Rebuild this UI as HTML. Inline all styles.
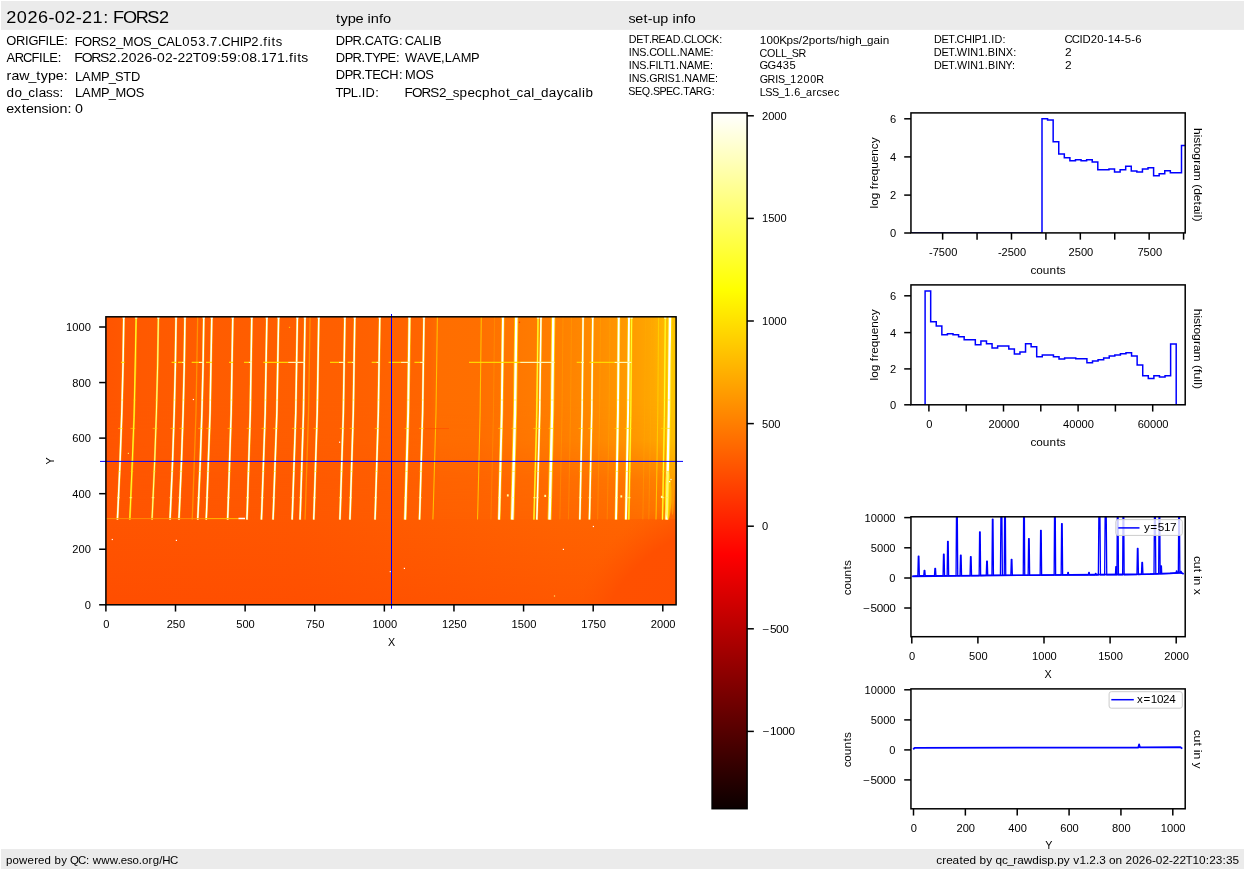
<!DOCTYPE html>
<html><head><meta charset="utf-8"><title>FORS2 raw display</title>
<style>html,body{margin:0;padding:0;background:#fff;}body{width:1245px;height:870px;overflow:hidden;font-family:"Liberation Sans", sans-serif;}svg{will-change:transform;}svg text{font-family:"Liberation Sans", sans-serif;}</style>
</head><body>
<svg width="1245" height="870" viewBox="0 0 1245 870" font-family='"Liberation Sans", sans-serif' style="display:block">
<defs>
<linearGradient id="hot" x1="0" y1="0" x2="0" y2="1"><stop offset="0" stop-color="#ffffff"/><stop offset="0.254" stop-color="#ffff00"/><stop offset="0.635" stop-color="#ff0000"/><stop offset="1" stop-color="#0b0000"/></linearGradient>
<linearGradient id="bgU" x1="105.9" y1="0" x2="676.1" y2="0" gradientUnits="userSpaceOnUse"><stop offset="0.0000" stop-color="rgb(255,84,0)"/><stop offset="0.0335" stop-color="rgb(255,88,0)"/><stop offset="0.1650" stop-color="rgb(255,92,0)"/><stop offset="0.3404" stop-color="rgb(255,94,0)"/><stop offset="0.4456" stop-color="rgb(255,96,0)"/><stop offset="0.5684" stop-color="rgb(255,101,0)"/><stop offset="0.5859" stop-color="rgb(255,110,0)"/><stop offset="0.6561" stop-color="rgb(255,111,0)"/><stop offset="0.6912" stop-color="rgb(255,116,0)"/><stop offset="0.7964" stop-color="rgb(255,128,0)"/><stop offset="0.8665" stop-color="rgb(255,141,0)"/><stop offset="0.9367" stop-color="rgb(255,160,0)"/><stop offset="0.9718" stop-color="rgb(255,172,0)"/><stop offset="1.0000" stop-color="rgb(255,186,0)"/></linearGradient>
<linearGradient id="fadeM" x1="0" y1="400" x2="0" y2="519" gradientUnits="userSpaceOnUse"><stop offset="0" stop-color="rgb(0,0,0)"/><stop offset="0.336" stop-color="rgb(31,31,31)"/><stop offset="0.672" stop-color="rgb(178,178,178)"/><stop offset="1" stop-color="rgb(242,242,242)"/></linearGradient>
<mask id="mFade" maskUnits="userSpaceOnUse" x="105" y="316" width="572" height="204"><rect x="105" y="400" width="572" height="119.2" fill="url(#fadeM)"/></mask>
<linearGradient id="fadeColH" x1="105.9" y1="0" x2="676.1" y2="0" gradientUnits="userSpaceOnUse"><stop offset="0.0000" stop-color="rgb(255,84,0)"/><stop offset="0.3404" stop-color="rgb(255,87,0)"/><stop offset="0.5859" stop-color="rgb(255,94,0)"/><stop offset="0.7964" stop-color="rgb(255,100,0)"/><stop offset="0.9016" stop-color="rgb(255,104,0)"/><stop offset="1.0000" stop-color="rgb(255,110,0)"/></linearGradient>
<linearGradient id="bgL" x1="105.9" y1="0" x2="676.1" y2="0" gradientUnits="userSpaceOnUse"><stop offset="0.0000" stop-color="rgb(255,85,0)"/><stop offset="0.3404" stop-color="rgb(255,87,0)"/><stop offset="0.5859" stop-color="rgb(255,93,0)"/><stop offset="0.7964" stop-color="rgb(255,99,0)"/><stop offset="0.9016" stop-color="rgb(255,100,0)"/><stop offset="1.0000" stop-color="rgb(255,98,0)"/></linearGradient>
<linearGradient id="dkL" x1="0" y1="519" x2="0" y2="604.8" gradientUnits="userSpaceOnUse"><stop offset="0" stop-color="rgb(255,60,0)" stop-opacity="0"/><stop offset="1" stop-color="rgb(255,60,0)" stop-opacity="0.3"/></linearGradient>
<radialGradient id="corner" cx="738" cy="669" r="180" gradientUnits="userSpaceOnUse"><stop offset="0" stop-color="rgb(255,78,0)" stop-opacity="1"/><stop offset="0.80" stop-color="rgb(255,80,0)" stop-opacity="1"/><stop offset="0.90" stop-color="rgb(255,84,0)" stop-opacity="0.5"/><stop offset="1" stop-color="rgb(255,90,0)" stop-opacity="0"/></radialGradient>
<radialGradient id="glowTR" cx="676" cy="330" r="150" gradientUnits="userSpaceOnUse" gradientTransform="translate(676 330) scale(0.16 1) translate(-676 -330)"><stop offset="0" stop-color="#ffd000" stop-opacity="0.45"/><stop offset="1" stop-color="#ffd000" stop-opacity="0"/></radialGradient>
<clipPath id="cImg"><rect x="105.9" y="316.8" width="570.2" height="288"/></clipPath>
<clipPath id="cP1"><rect x="910.95" y="112.9" width="274.25" height="120"/></clipPath>
<clipPath id="cP2"><rect x="910.95" y="284.9" width="274.25" height="119.9"/></clipPath>
<clipPath id="cP3"><rect x="910.95" y="516.8" width="274.25" height="119.9"/></clipPath>
<clipPath id="cP4"><rect x="910.95" y="688.9" width="274.25" height="119.9"/></clipPath>
</defs>
<rect x="0" y="0" width="1245" height="870" fill="#fff"/>
<rect x="1" y="1" width="1243" height="28.9" fill="#ebebeb"/>
<rect x="1" y="849" width="1243" height="20" fill="#ebebeb"/>
<text transform="translate(6.00 23.30) scale(1.0560 1)" x="0.25 10.29 20.33 30.38 40.16 46.12 56.16 65.95 71.90 81.94 92.02 97.18 101.37 110.69 122.87 133.84 144.82" y="0" font-size="17.17" fill="#000">2026-02-21: FORS2</text>
<text transform="translate(335.60 22.60) scale(1.1370 1)" x="0.37 4.34 10.73 17.60 24.52 28.15 31.01 38.22 41.73" y="0" font-size="12.88" fill="#000">type info</text>
<text transform="translate(628.80 22.60) scale(1.1126 1)" x="-0.29 5.73 13.18 17.05 21.20 28.33 35.47 39.18 42.15 49.48 53.10" y="0" font-size="12.88" fill="#000">set-up info</text>
<text transform="translate(6.40 44.90) scale(1.0000 1)" x="-0.09 9.53 18.58 22.05 31.56 39.14 42.68 49.39 57.95" y="0" font-size="12.88" fill="#000">ORIGFILE:</text>
<text transform="translate(75.00 45.70) scale(1.0091 1)" x="-0.37 6.99 16.53 25.12 33.71 40.74 47.40 57.98 67.50 75.24 81.59 90.51 98.91 106.30 114.18 122.07 129.77 133.89 141.59 145.02 154.00 163.35 166.40 174.79 182.49 186.64 190.90 194.69 198.92" y="0" font-size="12.88" fill="#000">FORS2_MOS_CAL053.7.CHIP2.fits</text>
<text transform="translate(6.40 61.70) scale(1.0000 1)" x="-0.02 8.24 16.64 25.00 32.59 36.12 42.84 51.40" y="0" font-size="12.88" fill="#000">ARCFILE:</text>
<text transform="translate(75.00 61.70) scale(1.0820 1)" x="-0.61 6.18 15.10 23.14 31.19 38.50 42.22 49.57 56.92 64.27 71.47 75.79 83.14 90.33 94.66 102.01 108.86 116.42 123.77 131.18 135.01 142.36 149.77 153.60 160.95 168.26 171.98 179.33 186.68 193.98 197.85 201.85 205.36 209.20" y="0" font-size="12.88" fill="#000">FORS2.2026-02-22T09:59:08.171.fits</text>
<text transform="translate(6.40 79.70) scale(1.1001 1)" x="0.19 4.57 11.63 20.19 27.05 31.21 37.81 44.92 52.12" y="0" font-size="12.88" fill="#000">raw_type:</text>
<text transform="translate(75.00 80.70) scale(1.0000 1)" x="-0.10 7.09 15.83 26.06 33.67 40.05 48.19 56.11" y="0" font-size="12.88" fill="#000">LAMP_STD</text>
<text transform="translate(6.40 97.40) scale(1.0493 1)" x="0.20 7.63 14.25 20.86 27.58 30.74 37.85 44.06 50.60" y="0" font-size="12.88" fill="#000">do_class:</text>
<text transform="translate(75.00 97.40) scale(1.0000 1)" x="-0.10 7.09 15.83 26.06 33.67 40.40 51.07 60.67" y="0" font-size="12.88" fill="#000">LAMP_MOS</text>
<text transform="translate(6.40 113.10) scale(1.1100 1)" x="-0.12 6.94 13.81 17.69 24.73 31.59 37.88 40.74 47.75 55.01" y="0" font-size="12.88" fill="#000">extension:</text>
<text transform="translate(75.00 113.10) scale(1.1107 1)" x="0.00" y="0" font-size="12.88" fill="#000">0</text>
<text transform="translate(335.60 44.50) scale(1.0000 1)" x="0.16 9.10 16.86 25.82 29.09 38.09 46.06 53.16 63.32" y="0" font-size="12.88" fill="#000">DPR.CATG:</text>
<text transform="translate(405.00 44.50) scale(1.0000 1)" x="-0.28 8.71 17.18 24.30 27.92" y="0" font-size="12.88" fill="#000">CALIB</text>
<text transform="translate(335.60 61.90) scale(1.0000 1)" x="0.16 9.10 16.86 25.82 29.26 36.54 44.12 51.84 60.40" y="0" font-size="12.88" fill="#000">DPR.TYPE:</text>
<text transform="translate(405.00 61.90) scale(1.0000 1)" x="0.10 12.00 19.81 27.63 36.07 39.75 46.94 55.68 65.91" y="0" font-size="12.88" fill="#000">WAVE,LAMP</text>
<text transform="translate(335.60 79.40) scale(1.0000 1)" x="0.16 9.10 16.86 25.82 29.26 36.67 44.63 53.69 63.35" y="0" font-size="12.88" fill="#000">DPR.TECH:</text>
<text transform="translate(405.00 79.40) scale(1.0000 1)" x="0.03 10.70 20.30" y="0" font-size="12.88" fill="#000">MOS</text>
<text transform="translate(335.60 96.70) scale(1.0000 1)" x="-0.11 7.11 15.08 22.34 26.17 29.96 39.74" y="0" font-size="12.88" fill="#000">TPL.ID:</text>
<text transform="translate(405.00 96.70) scale(1.0434 1)" x="-0.49 6.60 15.83 24.15 32.48 39.29 45.77 52.33 59.81 67.16 73.89 81.49 88.95 96.76 100.31 106.96 113.56 121.05 123.56 130.35 137.83 145.40 152.24 158.84 166.33 169.66 172.98" y="0" font-size="12.88" fill="#000">FORS2_specphot_cal_daycalib</text>
<text transform="translate(628.60 43.15) scale(1.0000 1)" x="0.14 7.74 14.51 20.52 22.79 30.00 36.86 44.14 52.19 55.10 62.53 68.16 76.01 83.36 90.62" y="0" font-size="10.73" fill="#000">DET.READ.CLOCK:</text>
<text transform="translate(759.80 43.85) scale(1.0917 1)" x="0.05 6.12 12.20 17.77 24.52 30.34 35.63 38.78 44.84 50.79 56.87 61.00 64.17 69.45 72.59 78.74 81.30 87.35 92.77 98.18 104.14 110.18 112.74" y="0" font-size="10.73" fill="#000">100Kps/2ports/high_gain</text>
<text transform="translate(628.60 56.10) scale(1.0000 1)" x="0.05 3.10 10.60 17.65 20.56 28.00 36.19 42.00 48.05 51.22 58.97 66.14 74.82 81.96" y="0" font-size="10.73" fill="#000">INS.COLL.NAME:</text>
<text transform="translate(759.80 56.60) scale(1.0000 1)" x="-0.24 7.20 15.40 21.20 26.71 32.03 38.66" y="0" font-size="10.73" fill="#000">COLL_SR</text>
<text transform="translate(628.60 69.00) scale(1.0000 1)" x="0.05 3.10 10.60 17.65 20.51 26.83 29.78 34.85 40.93 47.39 50.56 58.32 65.49 74.16 81.30" y="0" font-size="10.73" fill="#000">INS.FILT1.NAME:</text>
<text transform="translate(759.80 68.70) scale(1.0415 1)" x="-0.30 7.46 15.70 22.07 28.44" y="0" font-size="10.73" fill="#000">GG435</text>
<text transform="translate(628.60 82.00) scale(1.0000 1)" x="0.05 3.10 10.60 17.65 20.66 28.61 36.15 38.91 46.13 52.59 55.76 63.52 70.69 79.36 86.50" y="0" font-size="10.73" fill="#000">INS.GRIS1.NAME:</text>
<text transform="translate(759.80 82.60) scale(1.0021 1)" x="-0.15 7.79 15.32 18.07 24.56 30.47 37.09 43.70 50.32 56.35" y="0" font-size="10.73" fill="#000">GRIS_1200R</text>
<text transform="translate(628.60 94.90) scale(1.0000 1)" x="-0.27 6.33 13.12 21.56 24.44 30.89 37.32 43.96 51.63 54.69 60.73 67.21 74.57 83.04" y="0" font-size="10.73" fill="#000">SEQ.SPEC.TARG:</text>
<text transform="translate(759.80 95.50) scale(1.0128 1)" x="-0.12 5.42 11.95 18.38 24.23 30.63 34.04 39.89 45.61 52.08 56.01 61.41 66.95 73.24" y="0" font-size="10.73" fill="#000">LSS_1.6_arcsec</text>
<text transform="translate(933.80 43.15) scale(1.0070 1)" x="0.11 7.66 14.39 20.37 22.63 30.13 37.93 40.49 47.49 53.92 57.09 60.22 68.33" y="0" font-size="10.73" fill="#000">DET.CHIP1.ID:</text>
<text transform="translate(1064.90 43.15) scale(1.0541 1)" x="-0.42 6.48 13.77 16.65 24.49 30.78 36.91 40.64 46.93 53.05 56.78 62.91 66.64" y="0" font-size="10.73" fill="#000">CCID20-14-5-6</text>
<text transform="translate(933.80 56.10) scale(1.0212 1)" x="0.05 7.50 14.14 20.06 22.55 32.67 35.61 43.56 49.92 52.95 60.05 62.98 70.59 77.89" y="0" font-size="10.73" fill="#000">DET.WIN1.BINX:</text>
<text transform="translate(1064.90 56.10) scale(1.1107 1)" x="0.00" y="0" font-size="10.73" fill="#000">2</text>
<text transform="translate(933.80 69.00) scale(1.0020 1)" x="0.13 7.71 14.48 20.48 23.08 33.33 36.37 44.46 50.91 54.04 61.23 64.27 71.63 77.96" y="0" font-size="10.73" fill="#000">DET.WIN1.BINY:</text>
<text transform="translate(1064.90 69.00) scale(1.1107 1)" x="0.00" y="0" font-size="10.73" fill="#000">2</text>
<text transform="translate(6.00 863.80) scale(1.0700 1)" x="0.11 6.18 12.25 20.12 26.31 30.00 35.98 42.12 45.26 51.53 57.16 59.85 67.38 74.81 78.00 81.14 89.11 97.07 104.54 107.14 112.98 118.19 124.13 127.07 133.25 137.06 143.20 146.12 153.18" y="0" font-size="10.73" fill="#000">powered by QC: www.eso.org/HC</text>
<text transform="translate(1239.20 863.80) scale(1.1009 1)" x="-275.14 -269.69 -266.14 -260.43 -254.18 -250.91 -244.99 -238.99 -235.97 -229.87 -224.37 -221.36 -215.45 -210.78 -205.27 -201.62 -195.74 -187.98 -181.87 -179.58 -174.41 -168.41 -165.39 -159.28 -153.79 -150.67 -145.16 -139.16 -136.13 -130.12 -127.10 -121.09 -118.19 -112.29 -106.29 -103.27 -97.25 -91.23 -85.21 -79.29 -75.77 -69.75 -63.83 -60.31 -54.29 -48.68 -42.48 -36.46 -30.36 -27.25 -21.23 -15.13 -12.02 -6.00" y="0" font-size="10.73" fill="#000">created by qc_rawdisp.py v1.2.3 on 2026-02-22T10:23:35</text>
<g clip-path="url(#cImg)">
<rect x="105.9" y="316.8" width="570.2" height="202.2" fill="url(#bgU)"/>
<rect x="105.9" y="316.8" width="570.2" height="202.2" fill="url(#glowTR)"/>
<rect x="105.9" y="400" width="570.2" height="119.0" fill="url(#fadeColH)" mask="url(#mFade)"/>
<rect x="105.9" y="519.0" width="570.2" height="85.79999999999995" fill="url(#bgL)"/>
<rect x="105.9" y="519.0" width="570.2" height="85.79999999999995" fill="url(#dkL)"/>
<rect x="105.9" y="459.0" width="570.2" height="145.79999999999995" fill="url(#corner)"/>
<path d="M123.80,315.8 Q122.71,417.9 117.40,519.6" fill="none" stroke="#ffe800" stroke-width="2.3" stroke-opacity="0.65"/>
<path d="M123.80,315.8 Q122.71,417.9 117.40,519.6" fill="none" stroke="#fff" stroke-width="1.5"/>
<path d="M136.20,315.8 Q135.11,417.9 129.80,519.6" fill="none" stroke="#ffd800" stroke-width="1.9" stroke-opacity="0.7"/>
<path d="M136.20,315.8 Q135.11,417.9 129.80,519.6" fill="none" stroke="#ffff30" stroke-width="1.0"/>
<path d="M158.40,315.8 Q157.31,417.9 152.00,519.6" fill="none" stroke="#ffd800" stroke-width="2.0" stroke-opacity="0.7"/>
<path d="M158.40,315.8 Q157.31,417.9 152.00,519.6" fill="none" stroke="#ffff90" stroke-width="1.1"/>
<path d="M176.10,315.8 Q175.06,417.9 170.00,519.6" fill="none" stroke="#ffe800" stroke-width="2.3" stroke-opacity="0.65"/>
<path d="M176.10,315.8 Q175.06,417.9 170.00,519.6" fill="none" stroke="#fff" stroke-width="1.5"/>
<path d="M185.00,315.8 Q183.96,417.9 178.90,519.6" fill="none" stroke="#ffe800" stroke-width="2.3" stroke-opacity="0.65"/>
<path d="M185.00,315.8 Q183.96,417.9 178.90,519.6" fill="none" stroke="#fff" stroke-width="1.5"/>
<path d="M197.70,315.8 Q196.76,417.9 192.20,519.6" fill="none" stroke="#ff9a00" stroke-width="1.3" stroke-opacity="0.85"/>
<path d="M203.80,315.8 Q202.76,417.9 197.70,519.6" fill="none" stroke="#ffe800" stroke-width="2.3" stroke-opacity="0.65"/>
<path d="M203.80,315.8 Q202.76,417.9 197.70,519.6" fill="none" stroke="#fff" stroke-width="1.5"/>
<path d="M211.80,315.8 Q210.85,417.9 206.20,519.6" fill="none" stroke="#ffe800" stroke-width="2.3" stroke-opacity="0.65"/>
<path d="M211.80,315.8 Q210.85,417.9 206.20,519.6" fill="none" stroke="#fff" stroke-width="1.5"/>
<path d="M232.80,315.8 Q231.92,417.9 227.60,519.6" fill="none" stroke="#ffe800" stroke-width="2.3" stroke-opacity="0.65"/>
<path d="M232.80,315.8 Q231.92,417.9 227.60,519.6" fill="none" stroke="#fff" stroke-width="1.5"/>
<path d="M251.80,315.8 Q250.97,417.9 246.90,519.6" fill="none" stroke="#ffe800" stroke-width="2.3" stroke-opacity="0.65"/>
<path d="M251.80,315.8 Q250.97,417.9 246.90,519.6" fill="none" stroke="#fff" stroke-width="1.5"/>
<path d="M266.90,315.8 Q265.96,417.9 261.40,519.6" fill="none" stroke="#ffe800" stroke-width="2.3" stroke-opacity="0.65"/>
<path d="M266.90,315.8 Q265.96,417.9 261.40,519.6" fill="none" stroke="#fff" stroke-width="1.5"/>
<path d="M278.60,315.8 Q277.65,417.9 273.00,519.6" fill="none" stroke="#ffe800" stroke-width="2.3" stroke-opacity="0.65"/>
<path d="M278.60,315.8 Q277.65,417.9 273.00,519.6" fill="none" stroke="#fff" stroke-width="1.5"/>
<path d="M297.40,315.8 Q296.50,417.9 292.10,519.6" fill="none" stroke="#ffe800" stroke-width="2.3" stroke-opacity="0.65"/>
<path d="M297.40,315.8 Q296.50,417.9 292.10,519.6" fill="none" stroke="#fff" stroke-width="1.5"/>
<path d="M305.00,315.8 Q304.15,417.9 300.00,519.6" fill="none" stroke="#ffe800" stroke-width="2.3" stroke-opacity="0.65"/>
<path d="M305.00,315.8 Q304.15,417.9 300.00,519.6" fill="none" stroke="#fff" stroke-width="1.5"/>
<path d="M310.10,315.8 Q309.23,417.9 305.00,519.6" fill="none" stroke="#ff9a00" stroke-width="1.3" stroke-opacity="0.85"/>
<path d="M318.80,315.8 Q317.93,417.9 313.70,519.6" fill="none" stroke="#ffe800" stroke-width="2.3" stroke-opacity="0.65"/>
<path d="M318.80,315.8 Q317.93,417.9 313.70,519.6" fill="none" stroke="#fff" stroke-width="1.5"/>
<path d="M344.90,315.8 Q344.05,417.9 339.90,519.6" fill="none" stroke="#ffe800" stroke-width="2.3" stroke-opacity="0.65"/>
<path d="M344.90,315.8 Q344.05,417.9 339.90,519.6" fill="none" stroke="#fff" stroke-width="1.5"/>
<path d="M354.80,315.8 Q353.97,417.9 349.90,519.6" fill="none" stroke="#ffe800" stroke-width="2.3" stroke-opacity="0.65"/>
<path d="M354.80,315.8 Q353.97,417.9 349.90,519.6" fill="none" stroke="#fff" stroke-width="1.5"/>
<path d="M379.80,315.8 Q378.98,417.9 375.00,519.6" fill="none" stroke="#ffe800" stroke-width="2.3" stroke-opacity="0.65"/>
<path d="M379.80,315.8 Q378.98,417.9 375.00,519.6" fill="none" stroke="#fff" stroke-width="1.5"/>
<path d="M409.50,315.8 Q408.75,417.9 405.10,519.6" fill="none" stroke="#ffe800" stroke-width="3.0" stroke-opacity="0.75"/>
<path d="M409.50,315.8 Q408.75,417.9 405.10,519.6" fill="none" stroke="#fff" stroke-width="1.9"/>
<path d="M424.00,315.8 Q423.24,417.9 419.50,519.6" fill="none" stroke="#ffe800" stroke-width="2.3" stroke-opacity="0.65"/>
<path d="M424.00,315.8 Q423.24,417.9 419.50,519.6" fill="none" stroke="#fff" stroke-width="1.5"/>
<path d="M437.40,315.8 Q436.63,417.9 432.90,519.6" fill="none" stroke="#ffd000" stroke-width="1.1" stroke-opacity="0.85"/>
<path d="M481.30,315.8 Q480.65,417.9 477.50,519.6" fill="none" stroke="#ffd000" stroke-width="1.1" stroke-opacity="0.85"/>
<path d="M494.60,315.8 Q493.97,417.9 490.90,519.6" fill="none" stroke="#ffb000" stroke-width="1.1" stroke-opacity="0.3"/>
<path d="M503.00,315.8 Q502.32,417.9 499.00,519.6" fill="none" stroke="#ffe800" stroke-width="3.0" stroke-opacity="0.75"/>
<path d="M503.00,315.8 Q502.32,417.9 499.00,519.6" fill="none" stroke="#fff" stroke-width="1.9"/>
<path d="M516.30,315.8 Q515.60,417.9 512.20,519.6" fill="none" stroke="#ffe800" stroke-width="4.0" stroke-opacity="0.8"/>
<path d="M516.30,315.8 Q515.60,417.9 512.20,519.6" fill="none" stroke="#fff" stroke-width="2.4"/>
<path d="M538.10,315.8 Q537.39,417.9 533.90,519.6" fill="none" stroke="#ffd800" stroke-width="1.9" stroke-opacity="0.7"/>
<path d="M538.10,315.8 Q537.39,417.9 533.90,519.6" fill="none" stroke="#ffff30" stroke-width="1.0"/>
<path d="M541.00,315.8 Q540.29,417.9 536.80,519.6" fill="none" stroke="#ffe800" stroke-width="2.3" stroke-opacity="0.65"/>
<path d="M541.00,315.8 Q540.29,417.9 536.80,519.6" fill="none" stroke="#fff" stroke-width="1.5"/>
<path d="M553.30,315.8 Q552.65,417.9 549.50,519.6" fill="none" stroke="#ffe800" stroke-width="4.0" stroke-opacity="0.8"/>
<path d="M553.30,315.8 Q552.65,417.9 549.50,519.6" fill="none" stroke="#fff" stroke-width="2.4"/>
<path d="M583.10,315.8 Q582.54,417.9 579.80,519.6" fill="none" stroke="#ffe800" stroke-width="2.3" stroke-opacity="0.65"/>
<path d="M583.10,315.8 Q582.54,417.9 579.80,519.6" fill="none" stroke="#fff" stroke-width="1.5"/>
<path d="M592.80,315.8 Q592.22,417.9 589.40,519.6" fill="none" stroke="#ffe800" stroke-width="2.3" stroke-opacity="0.65"/>
<path d="M592.80,315.8 Q592.22,417.9 589.40,519.6" fill="none" stroke="#fff" stroke-width="1.5"/>
<path d="M618.80,315.8 Q618.32,417.9 616.00,519.6" fill="none" stroke="#ffe800" stroke-width="3.0" stroke-opacity="0.75"/>
<path d="M618.80,315.8 Q618.32,417.9 616.00,519.6" fill="none" stroke="#fff" stroke-width="1.9"/>
<path d="M629.00,315.8 Q628.47,417.9 625.90,519.6" fill="none" stroke="#ffe800" stroke-width="3.0" stroke-opacity="0.75"/>
<path d="M629.00,315.8 Q628.47,417.9 625.90,519.6" fill="none" stroke="#fff" stroke-width="1.9"/>
<path d="M631.70,315.8 Q631.21,417.9 628.80,519.6" fill="none" stroke="#ffd800" stroke-width="1.9" stroke-opacity="0.7"/>
<path d="M631.70,315.8 Q631.21,417.9 628.80,519.6" fill="none" stroke="#ffff30" stroke-width="1.0"/>
<path d="M658.60,315.8 Q658.16,417.9 656.00,519.6" fill="none" stroke="#ffd000" stroke-width="1.1" stroke-opacity="0.85"/>
<path d="M665.30,315.8 Q664.82,417.9 662.50,519.6" fill="none" stroke="#ffd800" stroke-width="1.9" stroke-opacity="0.7"/>
<path d="M665.30,315.8 Q664.82,417.9 662.50,519.6" fill="none" stroke="#ffff30" stroke-width="1.0"/>
<path d="M670.00,315.8 Q669.42,417.9 666.60,519.6" fill="none" stroke="#ffe800" stroke-width="4.0" stroke-opacity="0.8"/>
<path d="M670.00,315.8 Q669.42,417.9 666.60,519.6" fill="none" stroke="#fff" stroke-width="2.4"/>
<path d="M563.00,315.8 Q562.46,417.9 559.80,519.6" fill="none" stroke="#ffb000" stroke-width="1.1" stroke-opacity="0.3"/>
<path d="M571.50,315.8 Q570.97,417.9 568.40,519.6" fill="none" stroke="#ffb000" stroke-width="1.1" stroke-opacity="0.3"/>
<path d="M600.50,315.8 Q600.01,417.9 597.60,519.6" fill="none" stroke="#ffb000" stroke-width="1.1" stroke-opacity="0.3"/>
<path d="M610.00,315.8 Q609.52,417.9 607.20,519.6" fill="none" stroke="#ffb000" stroke-width="1.1" stroke-opacity="0.3"/>
<path d="M645.50,315.8 Q645.04,417.9 642.80,519.6" fill="none" stroke="#ffb000" stroke-width="1.1" stroke-opacity="0.3"/>
<path d="M651.50,315.8 Q651.04,417.9 648.80,519.6" fill="none" stroke="#ffb000" stroke-width="1.1" stroke-opacity="0.3"/>
<line x1="121" y1="362.4" x2="124.5" y2="362.4" stroke="#ffe000" stroke-width="1.1" stroke-opacity="0.9"/>
<line x1="171.6" y1="362.4" x2="176.1" y2="362.4" stroke="#ffe000" stroke-width="1.1" stroke-opacity="0.9"/>
<line x1="178" y1="362.4" x2="185" y2="362.4" stroke="#ffe000" stroke-width="1.1" stroke-opacity="0.9"/>
<line x1="182.2" y1="362.4" x2="185" y2="362.4" stroke="#fff" stroke-width="0.9" stroke-opacity="0.9"/>
<line x1="191.7" y1="362.4" x2="203.8" y2="362.4" stroke="#ffe000" stroke-width="1.1" stroke-opacity="0.9"/>
<line x1="199.0" y1="362.4" x2="203.8" y2="362.4" stroke="#fff" stroke-width="0.9" stroke-opacity="0.9"/>
<line x1="206" y1="362.4" x2="212" y2="362.4" stroke="#ffe000" stroke-width="1.1" stroke-opacity="0.9"/>
<line x1="229" y1="362.4" x2="233" y2="362.4" stroke="#ffe000" stroke-width="1.1" stroke-opacity="0.9"/>
<line x1="244" y1="362.4" x2="252" y2="362.4" stroke="#ffe000" stroke-width="1.1" stroke-opacity="0.9"/>
<line x1="248.8" y1="362.4" x2="252" y2="362.4" stroke="#fff" stroke-width="0.9" stroke-opacity="0.9"/>
<line x1="263.3" y1="362.4" x2="305" y2="362.4" stroke="#ffe000" stroke-width="1.1" stroke-opacity="0.9"/>
<line x1="288.3" y1="362.4" x2="305" y2="362.4" stroke="#fff" stroke-width="0.9" stroke-opacity="0.9"/>
<line x1="330" y1="362.4" x2="345" y2="362.4" stroke="#ffe000" stroke-width="1.1" stroke-opacity="0.9"/>
<line x1="339.0" y1="362.4" x2="345" y2="362.4" stroke="#fff" stroke-width="0.9" stroke-opacity="0.9"/>
<line x1="347.6" y1="362.4" x2="354.8" y2="362.4" stroke="#ffe000" stroke-width="1.1" stroke-opacity="0.9"/>
<line x1="351.9" y1="362.4" x2="354.8" y2="362.4" stroke="#fff" stroke-width="0.9" stroke-opacity="0.9"/>
<line x1="371.7" y1="362.4" x2="379.8" y2="362.4" stroke="#ffe000" stroke-width="1.1" stroke-opacity="0.9"/>
<line x1="376.6" y1="362.4" x2="379.8" y2="362.4" stroke="#fff" stroke-width="0.9" stroke-opacity="0.9"/>
<line x1="388.6" y1="362.4" x2="409.5" y2="362.4" stroke="#ffe000" stroke-width="1.1" stroke-opacity="0.9"/>
<line x1="401.1" y1="362.4" x2="409.5" y2="362.4" stroke="#fff" stroke-width="0.9" stroke-opacity="0.9"/>
<line x1="414.4" y1="362.4" x2="424" y2="362.4" stroke="#ffe000" stroke-width="1.1" stroke-opacity="0.9"/>
<line x1="420.2" y1="362.4" x2="424" y2="362.4" stroke="#fff" stroke-width="0.9" stroke-opacity="0.9"/>
<line x1="469" y1="362.4" x2="554.5" y2="362.4" stroke="#ffe000" stroke-width="1.1" stroke-opacity="0.9"/>
<line x1="520.3" y1="362.4" x2="554.5" y2="362.4" stroke="#fff" stroke-width="0.9" stroke-opacity="0.9"/>
<line x1="576.7" y1="362.4" x2="584" y2="362.4" stroke="#ffe000" stroke-width="1.1" stroke-opacity="0.9"/>
<line x1="581.1" y1="362.4" x2="584" y2="362.4" stroke="#fff" stroke-width="0.9" stroke-opacity="0.9"/>
<line x1="589.5" y1="362.4" x2="631.4" y2="362.4" stroke="#ffe000" stroke-width="1.1" stroke-opacity="0.9"/>
<line x1="614.6" y1="362.4" x2="631.4" y2="362.4" stroke="#fff" stroke-width="0.9" stroke-opacity="0.9"/>
<line x1="118.1" y1="428.4" x2="122.8" y2="428.4" stroke="#ffe000" stroke-width="1" stroke-opacity="0.6"/>
<line x1="117.0" y1="497.6" x2="119.8" y2="497.6" stroke="#ffffa0" stroke-width="1.1" stroke-opacity="0.55"/>
<line x1="118.2" y1="471.4" x2="120.9" y2="471.4" stroke="#ffe000" stroke-width="1" stroke-opacity="0.5"/>
<line x1="120.8" y1="400" x2="123.2" y2="400" stroke="#ffe000" stroke-width="1" stroke-opacity="0.4"/>
<rect x="122.5" y="317" width="2.4" height="1.6" fill="#fff" fill-opacity="0.8"/>
<line x1="130.5" y1="428.4" x2="135.2" y2="428.4" stroke="#ffe000" stroke-width="1" stroke-opacity="0.6"/>
<line x1="129.4" y1="497.6" x2="132.2" y2="497.6" stroke="#ffffa0" stroke-width="1.1" stroke-opacity="0.55"/>
<line x1="130.6" y1="471.4" x2="133.3" y2="471.4" stroke="#ffe000" stroke-width="1" stroke-opacity="0.5"/>
<line x1="133.2" y1="400" x2="135.6" y2="400" stroke="#ffe000" stroke-width="1" stroke-opacity="0.4"/>
<rect x="134.9" y="317" width="2.4" height="1.6" fill="#fff" fill-opacity="0.8"/>
<line x1="152.7" y1="428.4" x2="157.4" y2="428.4" stroke="#ffe000" stroke-width="1" stroke-opacity="0.6"/>
<line x1="151.6" y1="497.6" x2="154.4" y2="497.6" stroke="#ffffa0" stroke-width="1.1" stroke-opacity="0.55"/>
<line x1="152.8" y1="471.4" x2="155.5" y2="471.4" stroke="#ffe000" stroke-width="1" stroke-opacity="0.5"/>
<line x1="155.4" y1="400" x2="157.8" y2="400" stroke="#ffe000" stroke-width="1" stroke-opacity="0.4"/>
<rect x="157.1" y="317" width="2.4" height="1.6" fill="#fff" fill-opacity="0.8"/>
<line x1="170.5" y1="428.4" x2="175.2" y2="428.4" stroke="#ffe000" stroke-width="1" stroke-opacity="0.6"/>
<line x1="169.5" y1="497.6" x2="172.3" y2="497.6" stroke="#ffffa0" stroke-width="1.1" stroke-opacity="0.55"/>
<line x1="170.7" y1="471.4" x2="173.4" y2="471.4" stroke="#ffe000" stroke-width="1" stroke-opacity="0.5"/>
<line x1="173.2" y1="400" x2="175.6" y2="400" stroke="#ffe000" stroke-width="1" stroke-opacity="0.4"/>
<rect x="174.8" y="317" width="2.4" height="1.6" fill="#fff" fill-opacity="0.8"/>
<line x1="179.4" y1="428.4" x2="184.1" y2="428.4" stroke="#ffe000" stroke-width="1" stroke-opacity="0.6"/>
<line x1="178.4" y1="497.6" x2="181.2" y2="497.6" stroke="#ffffa0" stroke-width="1.1" stroke-opacity="0.55"/>
<line x1="179.6" y1="471.4" x2="182.3" y2="471.4" stroke="#ffe000" stroke-width="1" stroke-opacity="0.5"/>
<line x1="182.1" y1="400" x2="184.5" y2="400" stroke="#ffe000" stroke-width="1" stroke-opacity="0.4"/>
<rect x="183.7" y="317" width="2.4" height="1.6" fill="#fff" fill-opacity="0.8"/>
<line x1="198.2" y1="428.4" x2="202.9" y2="428.4" stroke="#ffe000" stroke-width="1" stroke-opacity="0.6"/>
<line x1="197.2" y1="497.6" x2="200.0" y2="497.6" stroke="#ffffa0" stroke-width="1.1" stroke-opacity="0.55"/>
<line x1="198.4" y1="471.4" x2="201.1" y2="471.4" stroke="#ffe000" stroke-width="1" stroke-opacity="0.5"/>
<line x1="200.9" y1="400" x2="203.3" y2="400" stroke="#ffe000" stroke-width="1" stroke-opacity="0.4"/>
<rect x="202.5" y="317" width="2.4" height="1.6" fill="#fff" fill-opacity="0.8"/>
<line x1="206.4" y1="428.4" x2="211.1" y2="428.4" stroke="#ffe000" stroke-width="1" stroke-opacity="0.6"/>
<line x1="205.6" y1="497.6" x2="208.4" y2="497.6" stroke="#ffffa0" stroke-width="1.1" stroke-opacity="0.55"/>
<line x1="206.7" y1="471.4" x2="209.4" y2="471.4" stroke="#ffe000" stroke-width="1" stroke-opacity="0.5"/>
<line x1="209.0" y1="400" x2="211.4" y2="400" stroke="#ffe000" stroke-width="1" stroke-opacity="0.4"/>
<rect x="210.5" y="317" width="2.4" height="1.6" fill="#fff" fill-opacity="0.8"/>
<line x1="227.6" y1="428.4" x2="232.3" y2="428.4" stroke="#ffe000" stroke-width="1" stroke-opacity="0.6"/>
<line x1="227.0" y1="497.6" x2="229.8" y2="497.6" stroke="#ffffa0" stroke-width="1.1" stroke-opacity="0.55"/>
<line x1="227.9" y1="471.4" x2="230.6" y2="471.4" stroke="#ffe000" stroke-width="1" stroke-opacity="0.5"/>
<line x1="230.1" y1="400" x2="232.5" y2="400" stroke="#ffe000" stroke-width="1" stroke-opacity="0.4"/>
<rect x="231.5" y="317" width="2.4" height="1.6" fill="#fff" fill-opacity="0.8"/>
<line x1="246.7" y1="428.4" x2="251.4" y2="428.4" stroke="#ffe000" stroke-width="1" stroke-opacity="0.6"/>
<line x1="246.2" y1="497.6" x2="249.0" y2="497.6" stroke="#ffffa0" stroke-width="1.1" stroke-opacity="0.55"/>
<line x1="247.1" y1="471.4" x2="249.8" y2="471.4" stroke="#ffe000" stroke-width="1" stroke-opacity="0.5"/>
<line x1="249.2" y1="400" x2="251.6" y2="400" stroke="#ffe000" stroke-width="1" stroke-opacity="0.4"/>
<rect x="250.5" y="317" width="2.4" height="1.6" fill="#fff" fill-opacity="0.8"/>
<line x1="261.6" y1="428.4" x2="266.3" y2="428.4" stroke="#ffe000" stroke-width="1" stroke-opacity="0.6"/>
<line x1="260.8" y1="497.6" x2="263.6" y2="497.6" stroke="#ffffa0" stroke-width="1.1" stroke-opacity="0.55"/>
<line x1="261.8" y1="471.4" x2="264.5" y2="471.4" stroke="#ffe000" stroke-width="1" stroke-opacity="0.5"/>
<line x1="264.1" y1="400" x2="266.5" y2="400" stroke="#ffe000" stroke-width="1" stroke-opacity="0.4"/>
<rect x="265.6" y="317" width="2.4" height="1.6" fill="#fff" fill-opacity="0.8"/>
<line x1="273.2" y1="428.4" x2="277.9" y2="428.4" stroke="#ffe000" stroke-width="1" stroke-opacity="0.6"/>
<line x1="272.4" y1="497.6" x2="275.2" y2="497.6" stroke="#ffffa0" stroke-width="1.1" stroke-opacity="0.55"/>
<line x1="273.5" y1="471.4" x2="276.2" y2="471.4" stroke="#ffe000" stroke-width="1" stroke-opacity="0.5"/>
<line x1="275.8" y1="400" x2="278.2" y2="400" stroke="#ffe000" stroke-width="1" stroke-opacity="0.4"/>
<rect x="277.3" y="317" width="2.4" height="1.6" fill="#fff" fill-opacity="0.8"/>
<line x1="292.1" y1="428.4" x2="296.8" y2="428.4" stroke="#ffe000" stroke-width="1" stroke-opacity="0.6"/>
<line x1="291.5" y1="497.6" x2="294.3" y2="497.6" stroke="#ffffa0" stroke-width="1.1" stroke-opacity="0.55"/>
<line x1="292.5" y1="471.4" x2="295.2" y2="471.4" stroke="#ffe000" stroke-width="1" stroke-opacity="0.5"/>
<line x1="294.7" y1="400" x2="297.1" y2="400" stroke="#ffe000" stroke-width="1" stroke-opacity="0.4"/>
<rect x="296.1" y="317" width="2.4" height="1.6" fill="#fff" fill-opacity="0.8"/>
<line x1="299.9" y1="428.4" x2="304.6" y2="428.4" stroke="#ffe000" stroke-width="1" stroke-opacity="0.6"/>
<line x1="299.3" y1="497.6" x2="302.1" y2="497.6" stroke="#ffffa0" stroke-width="1.1" stroke-opacity="0.55"/>
<line x1="300.3" y1="471.4" x2="303.0" y2="471.4" stroke="#ffe000" stroke-width="1" stroke-opacity="0.5"/>
<line x1="302.3" y1="400" x2="304.7" y2="400" stroke="#ffe000" stroke-width="1" stroke-opacity="0.4"/>
<rect x="303.7" y="317" width="2.4" height="1.6" fill="#fff" fill-opacity="0.8"/>
<line x1="313.6" y1="428.4" x2="318.3" y2="428.4" stroke="#ffe000" stroke-width="1" stroke-opacity="0.6"/>
<line x1="313.1" y1="497.6" x2="315.9" y2="497.6" stroke="#ffffa0" stroke-width="1.1" stroke-opacity="0.55"/>
<line x1="314.0" y1="471.4" x2="316.7" y2="471.4" stroke="#ffe000" stroke-width="1" stroke-opacity="0.5"/>
<line x1="316.1" y1="400" x2="318.5" y2="400" stroke="#ffe000" stroke-width="1" stroke-opacity="0.4"/>
<rect x="317.5" y="317" width="2.4" height="1.6" fill="#fff" fill-opacity="0.8"/>
<line x1="339.8" y1="428.4" x2="344.5" y2="428.4" stroke="#ffe000" stroke-width="1" stroke-opacity="0.6"/>
<line x1="339.2" y1="497.6" x2="342.0" y2="497.6" stroke="#ffffa0" stroke-width="1.1" stroke-opacity="0.55"/>
<line x1="340.2" y1="471.4" x2="342.9" y2="471.4" stroke="#ffe000" stroke-width="1" stroke-opacity="0.5"/>
<line x1="342.2" y1="400" x2="344.6" y2="400" stroke="#ffe000" stroke-width="1" stroke-opacity="0.4"/>
<rect x="343.6" y="317" width="2.4" height="1.6" fill="#fff" fill-opacity="0.8"/>
<line x1="349.7" y1="428.4" x2="354.4" y2="428.4" stroke="#ffe000" stroke-width="1" stroke-opacity="0.6"/>
<line x1="349.2" y1="497.6" x2="352.0" y2="497.6" stroke="#ffffa0" stroke-width="1.1" stroke-opacity="0.55"/>
<line x1="350.1" y1="471.4" x2="352.8" y2="471.4" stroke="#ffe000" stroke-width="1" stroke-opacity="0.5"/>
<line x1="352.2" y1="400" x2="354.6" y2="400" stroke="#ffe000" stroke-width="1" stroke-opacity="0.4"/>
<rect x="353.5" y="317" width="2.4" height="1.6" fill="#fff" fill-opacity="0.8"/>
<line x1="374.7" y1="428.4" x2="379.4" y2="428.4" stroke="#ffe000" stroke-width="1" stroke-opacity="0.6"/>
<line x1="374.3" y1="497.6" x2="377.1" y2="497.6" stroke="#ffffa0" stroke-width="1.1" stroke-opacity="0.55"/>
<line x1="375.2" y1="471.4" x2="377.9" y2="471.4" stroke="#ffe000" stroke-width="1" stroke-opacity="0.5"/>
<line x1="377.2" y1="400" x2="379.6" y2="400" stroke="#ffe000" stroke-width="1" stroke-opacity="0.4"/>
<rect x="378.5" y="317" width="2.4" height="1.6" fill="#fff" fill-opacity="0.8"/>
<line x1="404.6" y1="428.4" x2="409.3" y2="428.4" stroke="#ffe000" stroke-width="1" stroke-opacity="0.6"/>
<line x1="404.3" y1="497.6" x2="407.1" y2="497.6" stroke="#ffffa0" stroke-width="1.1" stroke-opacity="0.55"/>
<line x1="405.2" y1="471.4" x2="407.9" y2="471.4" stroke="#ffe000" stroke-width="1" stroke-opacity="0.5"/>
<line x1="407.0" y1="400" x2="409.4" y2="400" stroke="#ffe000" stroke-width="1" stroke-opacity="0.4"/>
<rect x="408.2" y="317" width="2.4" height="1.6" fill="#fff" fill-opacity="0.8"/>
<line x1="419.1" y1="428.4" x2="423.8" y2="428.4" stroke="#ffe000" stroke-width="1" stroke-opacity="0.6"/>
<line x1="418.8" y1="497.6" x2="421.6" y2="497.6" stroke="#ffffa0" stroke-width="1.1" stroke-opacity="0.55"/>
<line x1="419.6" y1="471.4" x2="422.3" y2="471.4" stroke="#ffe000" stroke-width="1" stroke-opacity="0.5"/>
<line x1="421.5" y1="400" x2="423.9" y2="400" stroke="#ffe000" stroke-width="1" stroke-opacity="0.4"/>
<rect x="422.7" y="317" width="2.4" height="1.6" fill="#fff" fill-opacity="0.8"/>
<line x1="498.2" y1="428.4" x2="502.9" y2="428.4" stroke="#ffe000" stroke-width="1" stroke-opacity="0.6"/>
<line x1="498.2" y1="497.6" x2="501.0" y2="497.6" stroke="#ffffa0" stroke-width="1.1" stroke-opacity="0.55"/>
<line x1="498.9" y1="471.4" x2="501.6" y2="471.4" stroke="#ffe000" stroke-width="1" stroke-opacity="0.5"/>
<line x1="500.6" y1="400" x2="503.0" y2="400" stroke="#ffe000" stroke-width="1" stroke-opacity="0.4"/>
<rect x="501.7" y="317" width="2.4" height="1.6" fill="#fff" fill-opacity="0.8"/>
<line x1="511.5" y1="428.4" x2="516.2" y2="428.4" stroke="#ffe000" stroke-width="1" stroke-opacity="0.6"/>
<line x1="511.4" y1="497.6" x2="514.2" y2="497.6" stroke="#ffffa0" stroke-width="1.1" stroke-opacity="0.55"/>
<line x1="512.2" y1="471.4" x2="514.9" y2="471.4" stroke="#ffe000" stroke-width="1" stroke-opacity="0.5"/>
<line x1="513.9" y1="400" x2="516.3" y2="400" stroke="#ffe000" stroke-width="1" stroke-opacity="0.4"/>
<rect x="515.0" y="317" width="2.4" height="1.6" fill="#fff" fill-opacity="0.8"/>
<line x1="533.3" y1="428.4" x2="538.0" y2="428.4" stroke="#ffe000" stroke-width="1" stroke-opacity="0.6"/>
<line x1="533.1" y1="497.6" x2="535.9" y2="497.6" stroke="#ffffa0" stroke-width="1.1" stroke-opacity="0.55"/>
<line x1="533.9" y1="471.4" x2="536.6" y2="471.4" stroke="#ffe000" stroke-width="1" stroke-opacity="0.5"/>
<line x1="535.6" y1="400" x2="538.0" y2="400" stroke="#ffe000" stroke-width="1" stroke-opacity="0.4"/>
<rect x="536.8" y="317" width="2.4" height="1.6" fill="#fff" fill-opacity="0.8"/>
<line x1="536.2" y1="428.4" x2="540.9" y2="428.4" stroke="#ffe000" stroke-width="1" stroke-opacity="0.6"/>
<line x1="536.0" y1="497.6" x2="538.8" y2="497.6" stroke="#ffffa0" stroke-width="1.1" stroke-opacity="0.55"/>
<line x1="536.8" y1="471.4" x2="539.5" y2="471.4" stroke="#ffe000" stroke-width="1" stroke-opacity="0.5"/>
<line x1="538.5" y1="400" x2="540.9" y2="400" stroke="#ffe000" stroke-width="1" stroke-opacity="0.4"/>
<rect x="539.7" y="317" width="2.4" height="1.6" fill="#fff" fill-opacity="0.8"/>
<line x1="548.6" y1="428.4" x2="553.3" y2="428.4" stroke="#ffe000" stroke-width="1" stroke-opacity="0.6"/>
<line x1="548.6" y1="497.6" x2="551.4" y2="497.6" stroke="#ffffa0" stroke-width="1.1" stroke-opacity="0.55"/>
<line x1="549.3" y1="471.4" x2="552.0" y2="471.4" stroke="#ffe000" stroke-width="1" stroke-opacity="0.5"/>
<line x1="550.9" y1="400" x2="553.3" y2="400" stroke="#ffe000" stroke-width="1" stroke-opacity="0.4"/>
<rect x="552.0" y="317" width="2.4" height="1.6" fill="#fff" fill-opacity="0.8"/>
<line x1="578.6" y1="428.4" x2="583.3" y2="428.4" stroke="#ffe000" stroke-width="1" stroke-opacity="0.6"/>
<line x1="578.9" y1="497.6" x2="581.7" y2="497.6" stroke="#ffffa0" stroke-width="1.1" stroke-opacity="0.55"/>
<line x1="579.5" y1="471.4" x2="582.2" y2="471.4" stroke="#ffe000" stroke-width="1" stroke-opacity="0.5"/>
<line x1="580.9" y1="400" x2="583.3" y2="400" stroke="#ffe000" stroke-width="1" stroke-opacity="0.4"/>
<rect x="581.8" y="317" width="2.4" height="1.6" fill="#fff" fill-opacity="0.8"/>
<line x1="588.3" y1="428.4" x2="593.0" y2="428.4" stroke="#ffe000" stroke-width="1" stroke-opacity="0.6"/>
<line x1="588.5" y1="497.6" x2="591.3" y2="497.6" stroke="#ffffa0" stroke-width="1.1" stroke-opacity="0.55"/>
<line x1="589.1" y1="471.4" x2="591.8" y2="471.4" stroke="#ffe000" stroke-width="1" stroke-opacity="0.5"/>
<line x1="590.5" y1="400" x2="592.9" y2="400" stroke="#ffe000" stroke-width="1" stroke-opacity="0.4"/>
<rect x="591.5" y="317" width="2.4" height="1.6" fill="#fff" fill-opacity="0.8"/>
<line x1="614.5" y1="428.4" x2="619.2" y2="428.4" stroke="#ffe000" stroke-width="1" stroke-opacity="0.6"/>
<line x1="615.0" y1="497.6" x2="617.8" y2="497.6" stroke="#ffffa0" stroke-width="1.1" stroke-opacity="0.55"/>
<line x1="615.5" y1="471.4" x2="618.2" y2="471.4" stroke="#ffe000" stroke-width="1" stroke-opacity="0.5"/>
<line x1="616.7" y1="400" x2="619.1" y2="400" stroke="#ffe000" stroke-width="1" stroke-opacity="0.4"/>
<rect x="617.5" y="317" width="2.4" height="1.6" fill="#fff" fill-opacity="0.8"/>
<line x1="624.6" y1="428.4" x2="629.3" y2="428.4" stroke="#ffe000" stroke-width="1" stroke-opacity="0.6"/>
<line x1="624.9" y1="497.6" x2="627.7" y2="497.6" stroke="#ffffa0" stroke-width="1.1" stroke-opacity="0.55"/>
<line x1="625.5" y1="471.4" x2="628.2" y2="471.4" stroke="#ffe000" stroke-width="1" stroke-opacity="0.5"/>
<line x1="626.8" y1="400" x2="629.2" y2="400" stroke="#ffe000" stroke-width="1" stroke-opacity="0.4"/>
<rect x="627.7" y="317" width="2.4" height="1.6" fill="#fff" fill-opacity="0.8"/>
<line x1="627.4" y1="428.4" x2="632.1" y2="428.4" stroke="#ffe000" stroke-width="1" stroke-opacity="0.6"/>
<line x1="627.8" y1="497.6" x2="630.6" y2="497.6" stroke="#ffffa0" stroke-width="1.1" stroke-opacity="0.55"/>
<line x1="628.3" y1="471.4" x2="631.0" y2="471.4" stroke="#ffe000" stroke-width="1" stroke-opacity="0.5"/>
<line x1="629.6" y1="400" x2="632.0" y2="400" stroke="#ffe000" stroke-width="1" stroke-opacity="0.4"/>
<rect x="630.4" y="317" width="2.4" height="1.6" fill="#fff" fill-opacity="0.8"/>
<line x1="661.0" y1="428.4" x2="665.7" y2="428.4" stroke="#ffe000" stroke-width="1" stroke-opacity="0.6"/>
<line x1="661.5" y1="497.6" x2="664.3" y2="497.6" stroke="#ffffa0" stroke-width="1.1" stroke-opacity="0.55"/>
<line x1="662.0" y1="471.4" x2="664.7" y2="471.4" stroke="#ffe000" stroke-width="1" stroke-opacity="0.5"/>
<line x1="663.2" y1="400" x2="665.6" y2="400" stroke="#ffe000" stroke-width="1" stroke-opacity="0.4"/>
<rect x="664.0" y="317" width="2.4" height="1.6" fill="#fff" fill-opacity="0.8"/>
<line x1="665.5" y1="428.4" x2="670.2" y2="428.4" stroke="#ffe000" stroke-width="1" stroke-opacity="0.6"/>
<line x1="665.7" y1="497.6" x2="668.5" y2="497.6" stroke="#ffffa0" stroke-width="1.1" stroke-opacity="0.55"/>
<line x1="666.3" y1="471.4" x2="669.0" y2="471.4" stroke="#ffe000" stroke-width="1" stroke-opacity="0.5"/>
<line x1="667.7" y1="400" x2="670.1" y2="400" stroke="#ffe000" stroke-width="1" stroke-opacity="0.4"/>
<rect x="668.7" y="317" width="2.4" height="1.6" fill="#fff" fill-opacity="0.8"/>
<line x1="105.9" y1="518.6" x2="239" y2="518.6" stroke="#ff9400" stroke-width="1.0" stroke-opacity="0.9"/>
<line x1="205" y1="518.6" x2="239" y2="518.6" stroke="#ffd000" stroke-width="1.0" stroke-opacity="0.6"/>
<line x1="238.5" y1="518.5" x2="245" y2="518.5" stroke="#fff" stroke-width="1.3"/>
<line x1="425" y1="428.6" x2="449" y2="428.6" stroke="#ff4a00" stroke-width="1" stroke-opacity="0.6"/>
<ellipse cx="668" cy="495" rx="3.4" ry="24" fill="#ffee00" fill-opacity="0.55"/>
<ellipse cx="672.5" cy="420" rx="3" ry="95" fill="#ffd800" fill-opacity="0.35"/>
<rect x="111.7" y="538.9" width="1.2" height="1.2" fill="#fff"/>
<rect x="175.8" y="539.8" width="1.2" height="1.2" fill="#fff"/>
<rect x="127.8" y="452.8" width="1.2" height="1.2" fill="#ffe060"/>
<rect x="192.8" y="398.9" width="1.2" height="1.2" fill="#fff"/>
<rect x="339.0" y="441.6" width="1.2" height="1.2" fill="#fff"/>
<rect x="288.9" y="326.8" width="1.2" height="1.2" fill="#ffc000"/>
<rect x="389.7" y="571.0" width="1.2" height="1.2" fill="#fff"/>
<rect x="403.8" y="567.8" width="1.2" height="1.2" fill="#fff"/>
<rect x="592.8" y="525.9" width="1.2" height="1.2" fill="#fff"/>
<rect x="562.8" y="548.8" width="1.2" height="1.2" fill="#fff"/>
<rect x="553.9" y="595.4" width="1.2" height="1.2" fill="#ffe060"/>
<rect x="518.9" y="321.7" width="1.2" height="1.2" fill="#ff3000"/>
<rect x="670.4" y="478.9" width="1.2" height="1.2" fill="#fff"/>
<rect x="669.0" y="481.0" width="1.2" height="1.2" fill="#fff"/>
<rect x="506.9" y="494.3" width="1.8" height="2.2" fill="#ffffa0"/>
<rect x="544.3" y="494.8" width="1.8" height="2.2" fill="#ffffa0"/>
<rect x="620.4" y="495.3" width="1.8" height="2.2" fill="#ffffa0"/>
<rect x="660.9" y="495.8" width="1.8" height="2.2" fill="#ffffa0"/>
</g>
<line x1="100.00" y1="461.40" x2="683.00" y2="461.40" stroke="#0000ff" stroke-width="1.0"/>
<line x1="391.50" y1="314.00" x2="391.50" y2="608.80" stroke="#0000ff" stroke-width="1.0"/>
<rect x="105.9" y="316.8" width="570.2" height="287.99999999999994" fill="none" stroke="#000" stroke-width="1.5"/>
<line x1="105.90" y1="604.80" x2="105.90" y2="611.56" stroke="#000" stroke-width="1.5"/>
<text transform="translate(106.30 627.80) scale(1.1107 1)" x="-2.78" y="0" font-size="10.01" fill="#000">0</text>
<line x1="175.51" y1="604.80" x2="175.51" y2="611.56" stroke="#000" stroke-width="1.5"/>
<text transform="translate(175.91 627.80) scale(1.1107 1)" x="-8.35 -2.78 2.78" y="0" font-size="10.01" fill="#000">250</text>
<line x1="245.12" y1="604.80" x2="245.12" y2="611.56" stroke="#000" stroke-width="1.5"/>
<text transform="translate(245.53 627.80) scale(1.1107 1)" x="-8.35 -2.78 2.78" y="0" font-size="10.01" fill="#000">500</text>
<line x1="314.74" y1="604.80" x2="314.74" y2="611.56" stroke="#000" stroke-width="1.5"/>
<text transform="translate(315.14 627.80) scale(1.1107 1)" x="-8.35 -2.78 2.78" y="0" font-size="10.01" fill="#000">750</text>
<line x1="384.35" y1="604.80" x2="384.35" y2="611.56" stroke="#000" stroke-width="1.5"/>
<text transform="translate(384.75 627.80) scale(1.1107 1)" x="-11.14 -5.57 -0.00 5.57" y="0" font-size="10.01" fill="#000">1000</text>
<line x1="453.96" y1="604.80" x2="453.96" y2="611.56" stroke="#000" stroke-width="1.5"/>
<text transform="translate(454.36 627.80) scale(1.1107 1)" x="-11.14 -5.57 -0.00 5.57" y="0" font-size="10.01" fill="#000">1250</text>
<line x1="523.57" y1="604.80" x2="523.57" y2="611.56" stroke="#000" stroke-width="1.5"/>
<text transform="translate(523.97 627.80) scale(1.1107 1)" x="-11.14 -5.57 -0.00 5.57" y="0" font-size="10.01" fill="#000">1500</text>
<line x1="593.19" y1="604.80" x2="593.19" y2="611.56" stroke="#000" stroke-width="1.5"/>
<text transform="translate(593.59 627.80) scale(1.1107 1)" x="-11.14 -5.57 -0.00 5.57" y="0" font-size="10.01" fill="#000">1750</text>
<line x1="662.80" y1="604.80" x2="662.80" y2="611.56" stroke="#000" stroke-width="1.5"/>
<text transform="translate(663.20 627.80) scale(1.1107 1)" x="-11.14 -5.57 -0.00 5.57" y="0" font-size="10.01" fill="#000">2000</text>
<line x1="99.14" y1="604.80" x2="105.90" y2="604.80" stroke="#000" stroke-width="1.5"/>
<text transform="translate(90.80 609.00) scale(1.1107 1)" x="-5.57" y="0" font-size="10.01" fill="#000">0</text>
<line x1="99.14" y1="549.24" x2="105.90" y2="549.24" stroke="#000" stroke-width="1.5"/>
<text transform="translate(90.80 553.00) scale(1.1107 1)" x="-16.70 -11.14 -5.57" y="0" font-size="10.01" fill="#000">200</text>
<line x1="99.14" y1="493.68" x2="105.90" y2="493.68" stroke="#000" stroke-width="1.5"/>
<text transform="translate(90.80 498.00) scale(1.1107 1)" x="-16.70 -11.14 -5.57" y="0" font-size="10.01" fill="#000">400</text>
<line x1="99.14" y1="438.12" x2="105.90" y2="438.12" stroke="#000" stroke-width="1.5"/>
<text transform="translate(90.80 442.00) scale(1.1107 1)" x="-16.70 -11.14 -5.57" y="0" font-size="10.01" fill="#000">600</text>
<line x1="99.14" y1="382.56" x2="105.90" y2="382.56" stroke="#000" stroke-width="1.5"/>
<text transform="translate(90.80 387.00) scale(1.1107 1)" x="-16.70 -11.14 -5.57" y="0" font-size="10.01" fill="#000">800</text>
<line x1="99.14" y1="327.00" x2="105.90" y2="327.00" stroke="#000" stroke-width="1.5"/>
<text transform="translate(90.80 331.00) scale(1.1107 1)" x="-22.27 -16.70 -11.14 -5.57" y="0" font-size="10.01" fill="#000">1000</text>
<text transform="translate(391.60 645.80) scale(1.0000 1)" x="-3.58" y="0" font-size="10.73" fill="#000">X</text>
<text transform="translate(53.90 461.00) rotate(-90) scale(1.0000 1)" x="-3.58" y="0" font-size="10.73" fill="#000">Y</text>
<rect x="712.1" y="112.9" width="35.0" height="695.8000000000001" fill="url(#hot)" stroke="#000" stroke-width="1.5"/>
<line x1="747.10" y1="115.80" x2="753.86" y2="115.80" stroke="#000" stroke-width="1.5"/>
<text transform="translate(762.00 120.00) scale(1.1107 1)" x="0.00 5.57 11.14 16.70" y="0" font-size="10.01" fill="#000">2000</text>
<line x1="747.10" y1="218.40" x2="753.86" y2="218.40" stroke="#000" stroke-width="1.5"/>
<text transform="translate(762.00 222.00) scale(1.1107 1)" x="0.00 5.57 11.14 16.70" y="0" font-size="10.01" fill="#000">1500</text>
<line x1="747.10" y1="321.00" x2="753.86" y2="321.00" stroke="#000" stroke-width="1.5"/>
<text transform="translate(762.00 325.00) scale(1.1107 1)" x="0.00 5.57 11.14 16.70" y="0" font-size="10.01" fill="#000">1000</text>
<line x1="747.10" y1="423.60" x2="753.86" y2="423.60" stroke="#000" stroke-width="1.5"/>
<text transform="translate(762.00 428.00) scale(1.1107 1)" x="0.00 5.57 11.14" y="0" font-size="10.01" fill="#000">500</text>
<line x1="747.10" y1="526.20" x2="753.86" y2="526.20" stroke="#000" stroke-width="1.5"/>
<text transform="translate(762.00 530.00) scale(1.1107 1)" x="0.00" y="0" font-size="10.01" fill="#000">0</text>
<line x1="747.10" y1="628.80" x2="753.86" y2="628.80" stroke="#000" stroke-width="1.5"/>
<text transform="translate(762.00 633.00) scale(1.1839 1)" x="0.52 6.71 11.93 17.15" y="0" font-size="10.01" fill="#000">−500</text>
<line x1="747.10" y1="731.40" x2="753.86" y2="731.40" stroke="#000" stroke-width="1.5"/>
<text transform="translate(762.00 735.00) scale(1.1694 1)" x="0.56 6.82 12.11 17.40 22.69" y="0" font-size="10.01" fill="#000">−1000</text>
<path clip-path="url(#cP1)" d="M910.95,232.90 L1042.00,232.90 L1042.00,118.85 L1047.58,118.85 L1047.58,120.00 L1053.16,120.00 L1053.16,141.80 L1058.74,141.80 L1058.74,153.90 L1064.32,153.90 L1064.32,157.70 L1069.90,157.70 L1069.90,160.75 L1075.48,160.75 L1075.48,159.85 L1081.06,159.85 L1081.06,160.75 L1086.64,160.75 L1086.64,159.85 L1092.22,159.85 L1092.22,161.90 L1097.80,161.90 L1097.80,169.76 L1103.38,169.76 L1103.38,169.76 L1108.96,169.76 L1108.96,169.00 L1114.54,169.00 L1114.54,172.00 L1120.12,172.00 L1120.12,169.76 L1125.70,169.76 L1125.70,166.15 L1131.28,166.15 L1131.28,170.90 L1136.86,170.90 L1136.86,172.00 L1142.44,172.00 L1142.44,169.00 L1148.02,169.00 L1148.02,167.85 L1153.60,167.85 L1153.60,175.70 L1159.18,175.70 L1159.18,173.70 L1164.76,173.70 L1164.76,170.66 L1170.34,170.66 L1170.34,172.80 L1175.92,172.80 L1175.92,172.80 L1181.50,172.80 L1181.50,145.50 L1187.08,145.50 L1187.08,145.50 L1192.66,145.50" fill="none" stroke="#0000ff" stroke-width="1.5" stroke-linejoin="miter"/>
<rect x="910.95" y="112.9" width="274.25" height="120.0" fill="none" stroke="#000" stroke-width="1.5"/>
<line x1="904.19" y1="118.80" x2="910.95" y2="118.80" stroke="#000" stroke-width="1.5"/>
<text transform="translate(896.20 123.00) scale(1.1107 1)" x="-5.57" y="0" font-size="10.01" fill="#000">6</text>
<line x1="904.19" y1="156.90" x2="910.95" y2="156.90" stroke="#000" stroke-width="1.5"/>
<text transform="translate(896.20 161.00) scale(1.1107 1)" x="-5.57" y="0" font-size="10.01" fill="#000">4</text>
<line x1="904.19" y1="195.10" x2="910.95" y2="195.10" stroke="#000" stroke-width="1.5"/>
<text transform="translate(896.20 199.00) scale(1.1107 1)" x="-5.57" y="0" font-size="10.01" fill="#000">2</text>
<line x1="904.19" y1="233.00" x2="910.95" y2="233.00" stroke="#000" stroke-width="1.5"/>
<text transform="translate(896.20 237.00) scale(1.1107 1)" x="-5.57" y="0" font-size="10.01" fill="#000">0</text>
<line x1="942.64" y1="232.90" x2="942.64" y2="239.66" stroke="#000" stroke-width="1.5"/>
<text transform="translate(943.24 255.90) scale(1.1030 1)" x="-12.88 -9.60 -4.00 1.61 7.22" y="0" font-size="10.01" fill="#000">-7500</text>
<line x1="977.06" y1="232.90" x2="977.06" y2="239.66" stroke="#000" stroke-width="1.5"/>
<line x1="1011.48" y1="232.90" x2="1011.48" y2="239.66" stroke="#000" stroke-width="1.5"/>
<text transform="translate(1012.08 255.90) scale(1.1030 1)" x="-12.88 -9.60 -4.00 1.61 7.22" y="0" font-size="10.01" fill="#000">-2500</text>
<line x1="1045.90" y1="232.90" x2="1045.90" y2="239.66" stroke="#000" stroke-width="1.5"/>
<line x1="1080.32" y1="232.90" x2="1080.32" y2="239.66" stroke="#000" stroke-width="1.5"/>
<text transform="translate(1080.92 255.90) scale(1.1107 1)" x="-11.14 -5.57 -0.00 5.57" y="0" font-size="10.01" fill="#000">2500</text>
<line x1="1114.74" y1="232.90" x2="1114.74" y2="239.66" stroke="#000" stroke-width="1.5"/>
<line x1="1149.16" y1="232.90" x2="1149.16" y2="239.66" stroke="#000" stroke-width="1.5"/>
<text transform="translate(1149.76 255.90) scale(1.1107 1)" x="-11.14 -5.57 -0.00 5.57" y="0" font-size="10.01" fill="#000">7500</text>
<line x1="1183.58" y1="232.90" x2="1183.58" y2="239.66" stroke="#000" stroke-width="1.5"/>
<text transform="translate(1048.10 273.70) scale(1.1014 1)" x="-15.89 -10.70 -4.81 1.19 7.54 10.66" y="0" font-size="10.73" fill="#000">counts</text>
<text transform="translate(878.40 172.90) rotate(-90) scale(1.1090 1)" x="-32.11 -29.72 -23.86 -17.89 -14.75 -11.46 -7.93 -2.17 3.79 9.66 15.53 21.39 26.76" y="0" font-size="10.73" fill="#000">log frequency</text>
<text transform="translate(1194.00 174.80) rotate(90) scale(1.1283 1)" x="-41.51 -35.51 -33.31 -27.91 -24.76 -19.01 -12.98 -9.45 -3.61 5.34 8.31 11.84 17.62 23.76 26.91 32.81 35.38 37.87" y="0" font-size="10.73" fill="#000">histogram (detail)</text>
<path clip-path="url(#cP2)" d="M910.95,404.80 L925.10,404.80 L925.10,291.10 L930.68,291.10 L930.68,321.70 L936.26,321.70 L936.26,325.90 L941.84,325.90 L941.84,334.70 L947.42,334.70 L947.42,333.80 L953.00,333.80 L953.00,334.70 L958.58,334.70 L958.58,336.70 L964.16,336.70 L964.16,339.80 L969.74,339.80 L969.74,339.80 L975.32,339.80 L975.32,344.80 L980.90,344.80 L980.90,340.90 L986.48,340.90 L986.48,343.70 L992.06,343.70 L992.06,347.90 L997.64,347.90 L997.64,346.00 L1003.22,346.00 L1003.22,346.00 L1008.80,346.00 L1008.80,348.90 L1014.38,348.90 L1014.38,353.90 L1019.96,353.90 L1019.96,351.90 L1025.54,351.90 L1025.54,343.80 L1031.12,343.80 L1031.12,346.80 L1036.70,346.80 L1036.70,356.70 L1042.28,356.70 L1042.28,355.05 L1047.86,355.05 L1047.86,355.05 L1053.44,355.05 L1053.44,356.70 L1059.02,356.70 L1059.02,359.00 L1064.60,359.00 L1064.60,358.10 L1070.18,358.10 L1070.18,358.10 L1075.76,358.10 L1075.76,358.80 L1081.34,358.80 L1081.34,358.80 L1086.92,358.80 L1086.92,362.70 L1092.50,362.70 L1092.50,360.90 L1098.08,360.90 L1098.08,359.70 L1103.66,359.70 L1103.66,357.90 L1109.24,357.90 L1109.24,356.00 L1114.82,356.00 L1114.82,354.95 L1120.40,354.95 L1120.40,353.85 L1125.98,353.85 L1125.98,352.85 L1131.56,352.85 L1131.56,356.00 L1137.14,356.00 L1137.14,365.05 L1142.72,365.05 L1142.72,375.75 L1148.30,375.75 L1148.30,378.60 L1153.88,378.60 L1153.88,375.75 L1159.46,375.75 L1159.46,376.90 L1165.04,376.90 L1165.04,375.75 L1170.62,375.75 L1170.62,343.90 L1176.20,343.90 L1176.20,404.80 L1185.20,404.80" fill="none" stroke="#0000ff" stroke-width="1.5" stroke-linejoin="miter"/>
<rect x="910.95" y="284.9" width="274.25" height="119.90000000000003" fill="none" stroke="#000" stroke-width="1.5"/>
<line x1="904.19" y1="295.80" x2="910.95" y2="295.80" stroke="#000" stroke-width="1.5"/>
<text transform="translate(896.20 300.00) scale(1.1107 1)" x="-5.57" y="0" font-size="10.01" fill="#000">6</text>
<line x1="904.19" y1="332.60" x2="910.95" y2="332.60" stroke="#000" stroke-width="1.5"/>
<text transform="translate(896.20 337.00) scale(1.1107 1)" x="-5.57" y="0" font-size="10.01" fill="#000">4</text>
<line x1="904.19" y1="368.90" x2="910.95" y2="368.90" stroke="#000" stroke-width="1.5"/>
<text transform="translate(896.20 373.00) scale(1.1107 1)" x="-5.57" y="0" font-size="10.01" fill="#000">2</text>
<line x1="904.19" y1="404.80" x2="910.95" y2="404.80" stroke="#000" stroke-width="1.5"/>
<text transform="translate(896.20 409.00) scale(1.1107 1)" x="-5.57" y="0" font-size="10.01" fill="#000">0</text>
<line x1="928.90" y1="404.80" x2="928.90" y2="411.56" stroke="#000" stroke-width="1.5"/>
<text transform="translate(929.30 427.80) scale(1.1107 1)" x="-2.78" y="0" font-size="10.01" fill="#000">0</text>
<line x1="966.20" y1="404.80" x2="966.20" y2="411.56" stroke="#000" stroke-width="1.5"/>
<line x1="1003.50" y1="404.80" x2="1003.50" y2="411.56" stroke="#000" stroke-width="1.5"/>
<text transform="translate(1003.90 427.80) scale(1.1107 1)" x="-13.92 -8.35 -2.78 2.78 8.35" y="0" font-size="10.01" fill="#000">20000</text>
<line x1="1040.80" y1="404.80" x2="1040.80" y2="411.56" stroke="#000" stroke-width="1.5"/>
<line x1="1078.10" y1="404.80" x2="1078.10" y2="411.56" stroke="#000" stroke-width="1.5"/>
<text transform="translate(1078.50 427.80) scale(1.1107 1)" x="-13.92 -8.35 -2.78 2.78 8.35" y="0" font-size="10.01" fill="#000">40000</text>
<line x1="1115.40" y1="404.80" x2="1115.40" y2="411.56" stroke="#000" stroke-width="1.5"/>
<line x1="1152.70" y1="404.80" x2="1152.70" y2="411.56" stroke="#000" stroke-width="1.5"/>
<text transform="translate(1153.10 427.80) scale(1.1107 1)" x="-13.92 -8.35 -2.78 2.78 8.35" y="0" font-size="10.01" fill="#000">60000</text>
<text transform="translate(1048.10 445.60) scale(1.1014 1)" x="-15.89 -10.70 -4.81 1.19 7.54 10.66" y="0" font-size="10.73" fill="#000">counts</text>
<text transform="translate(878.40 344.85) rotate(-90) scale(1.1090 1)" x="-32.11 -29.72 -23.86 -17.89 -14.75 -11.46 -7.93 -2.17 3.79 9.66 15.53 21.39 26.76" y="0" font-size="10.73" fill="#000">log frequency</text>
<text transform="translate(1194.00 348.95) rotate(90) scale(1.1318 1)" x="-35.55 -29.56 -27.38 -21.98 -18.86 -13.12 -7.11 -3.59 2.23 11.16 14.12 17.83 20.88 26.87 29.42 31.90" y="0" font-size="10.73" fill="#000">histogram (full)</text>
<path clip-path="url(#cP3)" d="M912.2,576.40 L917.85,575.77 L918.30,556.20 L918.90,556.20 L919.35,575.77 L923.75,575.74 L924.20,570.30 L924.80,570.30 L925.25,575.74 L934.45,575.70 L934.90,568.30 L935.50,568.30 L935.95,575.70 L943.05,575.66 L943.50,554.20 L944.10,554.20 L944.55,575.66 L947.15,575.64 L947.60,541.30 L948.20,541.30 L948.65,575.64 L956.07,575.60 L956.57,500.00 L957.23,500.00 L957.73,575.60 L960.05,575.58 L960.50,555.10 L961.10,555.10 L961.55,575.58 L970.05,575.54 L970.50,556.70 L971.10,556.70 L971.55,575.54 L979.15,575.50 L979.60,532.00 L980.20,532.00 L980.65,575.50 L986.25,575.47 L986.70,561.10 L987.30,561.10 L987.75,575.47 L991.95,575.44 L992.40,519.10 L993.00,519.10 L993.45,575.44 L1000.42,575.40 L1001.01,500.00 L1001.79,500.00 L1002.38,575.40 L1004.25,575.39 L1004.70,500.00 L1005.30,500.00 L1005.75,575.39 L1010.85,575.36 L1011.30,559.30 L1011.90,559.30 L1012.35,575.36 L1023.25,575.30 L1023.70,500.00 L1024.30,500.00 L1024.75,575.30 L1028.15,575.28 L1028.60,538.60 L1029.20,538.60 L1029.65,575.28 L1040.15,575.23 L1040.60,530.30 L1041.20,530.30 L1041.65,575.23 L1054.15,575.17 L1054.60,500.00 L1055.20,500.00 L1055.65,575.17 L1061.15,575.14 L1061.60,523.60 L1062.20,523.60 L1062.65,575.14 L1067.50,575.11 L1067.86,572.30 L1068.34,572.30 L1068.70,575.11 L1088.40,575.02 L1088.76,572.30 L1089.24,572.30 L1089.60,575.02 L1095.17,574.99 L1095.49,573.30 L1095.91,573.30 L1096.23,574.99 L1098.35,574.97 L1098.98,500.00 L1099.82,500.00 L1100.45,574.97 L1104.65,574.94 L1105.28,500.00 L1106.12,500.00 L1106.75,574.94 L1115.47,574.90 L1115.79,566.70 L1116.21,566.70 L1116.53,574.90 L1116.95,574.89 L1117.40,500.00 L1118.00,500.00 L1118.45,574.89 L1122.65,574.87 L1123.10,500.00 L1123.70,500.00 L1124.15,574.87 L1136.95,574.52 L1137.40,548.40 L1138.00,548.40 L1138.45,574.52 L1141.45,574.35 L1141.90,562.40 L1142.50,562.40 L1142.95,574.35 L1154.00,573.88 L1154.54,500.00 L1155.26,500.00 L1155.80,573.88 L1158.65,573.71 L1159.10,500.00 L1159.70,500.00 L1160.15,573.71 L1160.67,573.64 L1160.99,565.80 L1161.41,565.80 L1161.73,573.64 L1176.07,573.06 L1176.39,571.00 L1176.81,571.00 L1177.12,573.06 L1178.35,572.97 L1178.80,500.00 L1179.40,500.00 L1179.85,572.97 L1180.47,572.90 L1180.79,571.50 L1181.21,571.50 L1181.53,572.90 L1183.6,573.80" fill="none" stroke="#0000ff" stroke-width="1.3" stroke-linejoin="round"/>
<path clip-path="url(#cP3)" d="M912.4,576.30 L1000,575.41 L1150,574.06 L1170,573.31 L1180,572.64 L1183.6,573.80" fill="none" stroke="#0000ff" stroke-width="1.7" stroke-linejoin="round"/>
<rect x="1115.8" y="519.6" width="66.5" height="15.8" rx="2.2" fill="#fff" fill-opacity="0.8" stroke="#ccc" stroke-width="1"/>
<line x1="1118.30" y1="527.90" x2="1139.50" y2="527.90" stroke="#0000ff" stroke-width="1.5"/>
<text transform="translate(1144.00 531.40) scale(1.1776 1)" x="-0.06 5.42 11.64 16.89 22.15" y="0" font-size="10.01" fill="#000">y=517</text>
<rect x="910.95" y="516.8" width="274.25" height="119.90000000000009" fill="none" stroke="#000" stroke-width="1.5"/>
<line x1="904.19" y1="517.60" x2="910.95" y2="517.60" stroke="#000" stroke-width="1.5"/>
<text transform="translate(895.50 522.00) scale(1.1107 1)" x="-27.84 -22.27 -16.70 -11.14 -5.57" y="0" font-size="10.01" fill="#000">10000</text>
<line x1="904.19" y1="547.80" x2="910.95" y2="547.80" stroke="#000" stroke-width="1.5"/>
<text transform="translate(895.50 552.00) scale(1.1107 1)" x="-22.27 -16.70 -11.14 -5.57" y="0" font-size="10.01" fill="#000">5000</text>
<line x1="904.19" y1="578.00" x2="910.95" y2="578.00" stroke="#000" stroke-width="1.5"/>
<text transform="translate(895.50 582.00) scale(1.1107 1)" x="-5.57" y="0" font-size="10.01" fill="#000">0</text>
<line x1="904.19" y1="608.00" x2="910.95" y2="608.00" stroke="#000" stroke-width="1.5"/>
<text transform="translate(895.50 612.00) scale(1.1694 1)" x="-27.56 -21.29 -16.01 -10.72 -5.43" y="0" font-size="10.01" fill="#000">−5000</text>
<line x1="911.80" y1="636.70" x2="911.80" y2="643.46" stroke="#000" stroke-width="1.5"/>
<text transform="translate(912.20 659.80) scale(1.1107 1)" x="-2.78" y="0" font-size="10.01" fill="#000">0</text>
<line x1="977.90" y1="636.70" x2="977.90" y2="643.46" stroke="#000" stroke-width="1.5"/>
<text transform="translate(978.30 659.80) scale(1.1107 1)" x="-8.35 -2.78 2.78" y="0" font-size="10.01" fill="#000">500</text>
<line x1="1044.00" y1="636.70" x2="1044.00" y2="643.46" stroke="#000" stroke-width="1.5"/>
<text transform="translate(1044.40 659.80) scale(1.1107 1)" x="-11.14 -5.57 -0.00 5.57" y="0" font-size="10.01" fill="#000">1000</text>
<line x1="1110.10" y1="636.70" x2="1110.10" y2="643.46" stroke="#000" stroke-width="1.5"/>
<text transform="translate(1110.50 659.80) scale(1.1107 1)" x="-11.14 -5.57 -0.00 5.57" y="0" font-size="10.01" fill="#000">1500</text>
<line x1="1176.20" y1="636.70" x2="1176.20" y2="643.46" stroke="#000" stroke-width="1.5"/>
<text transform="translate(1176.60 659.80) scale(1.1107 1)" x="-11.14 -5.57 -0.00 5.57" y="0" font-size="10.01" fill="#000">2000</text>
<text transform="translate(1048.10 677.50) scale(1.0000 1)" x="-3.58" y="0" font-size="10.73" fill="#000">X</text>
<text transform="translate(851.30 577.75) rotate(-90) scale(1.1014 1)" x="-15.89 -10.70 -4.81 1.19 7.54 10.66" y="0" font-size="10.73" fill="#000">counts</text>
<text transform="translate(1194.00 575.45) rotate(90) scale(1.1385 1)" x="-17.17 -12.05 -5.86 -2.61 0.41 2.79 8.64 11.61" y="0" font-size="10.73" fill="#000">cut in x</text>
<path clip-path="url(#cP4)" d="M913.2,749.4 L914.6,747.9 L1138.3,747.5 L1139.1,744.4 L1139.9,747.3 L1180.5,747.2 L1182.3,748.6" fill="none" stroke="#0000ff" stroke-width="1.8" stroke-linejoin="round"/>
<rect x="1109.1" y="691.7" width="73.2" height="16.5" rx="2.2" fill="#fff" fill-opacity="0.8" stroke="#ccc" stroke-width="1"/>
<line x1="1111.30" y1="699.70" x2="1133.80" y2="699.70" stroke="#0000ff" stroke-width="1.5"/>
<text transform="translate(1137.00 703.20) scale(1.1663 1)" x="-0.04 5.50 11.78 17.08 22.39 27.69" y="0" font-size="10.01" fill="#000">x=1024</text>
<rect x="910.95" y="688.9" width="274.25" height="119.89999999999998" fill="none" stroke="#000" stroke-width="1.5"/>
<line x1="904.19" y1="689.80" x2="910.95" y2="689.80" stroke="#000" stroke-width="1.5"/>
<text transform="translate(895.50 694.00) scale(1.1107 1)" x="-27.84 -22.27 -16.70 -11.14 -5.57" y="0" font-size="10.01" fill="#000">10000</text>
<line x1="904.19" y1="719.90" x2="910.95" y2="719.90" stroke="#000" stroke-width="1.5"/>
<text transform="translate(895.50 724.00) scale(1.1107 1)" x="-22.27 -16.70 -11.14 -5.57" y="0" font-size="10.01" fill="#000">5000</text>
<line x1="904.19" y1="749.90" x2="910.95" y2="749.90" stroke="#000" stroke-width="1.5"/>
<text transform="translate(895.50 754.00) scale(1.1107 1)" x="-5.57" y="0" font-size="10.01" fill="#000">0</text>
<line x1="904.19" y1="779.90" x2="910.95" y2="779.90" stroke="#000" stroke-width="1.5"/>
<text transform="translate(895.50 784.00) scale(1.1694 1)" x="-27.56 -21.29 -16.01 -10.72 -5.43" y="0" font-size="10.01" fill="#000">−5000</text>
<line x1="913.50" y1="808.80" x2="913.50" y2="815.56" stroke="#000" stroke-width="1.5"/>
<text transform="translate(913.90 831.80) scale(1.1107 1)" x="-2.78" y="0" font-size="10.01" fill="#000">0</text>
<line x1="965.36" y1="808.80" x2="965.36" y2="815.56" stroke="#000" stroke-width="1.5"/>
<text transform="translate(965.76 831.80) scale(1.1107 1)" x="-8.35 -2.78 2.78" y="0" font-size="10.01" fill="#000">200</text>
<line x1="1017.22" y1="808.80" x2="1017.22" y2="815.56" stroke="#000" stroke-width="1.5"/>
<text transform="translate(1017.62 831.80) scale(1.1107 1)" x="-8.35 -2.78 2.78" y="0" font-size="10.01" fill="#000">400</text>
<line x1="1069.08" y1="808.80" x2="1069.08" y2="815.56" stroke="#000" stroke-width="1.5"/>
<text transform="translate(1069.48 831.80) scale(1.1107 1)" x="-8.35 -2.78 2.78" y="0" font-size="10.01" fill="#000">600</text>
<line x1="1120.94" y1="808.80" x2="1120.94" y2="815.56" stroke="#000" stroke-width="1.5"/>
<text transform="translate(1121.34 831.80) scale(1.1107 1)" x="-8.35 -2.78 2.78" y="0" font-size="10.01" fill="#000">800</text>
<line x1="1172.80" y1="808.80" x2="1172.80" y2="815.56" stroke="#000" stroke-width="1.5"/>
<text transform="translate(1173.20 831.80) scale(1.1107 1)" x="-11.14 -5.57 -0.00 5.57" y="0" font-size="10.01" fill="#000">1000</text>
<text transform="translate(1048.90 848.90) scale(1.0000 1)" x="-3.58" y="0" font-size="10.73" fill="#000">Y</text>
<text transform="translate(851.30 749.85) rotate(-90) scale(1.1014 1)" x="-15.89 -10.70 -4.81 1.19 7.54 10.66" y="0" font-size="10.73" fill="#000">counts</text>
<text transform="translate(1194.00 749.25) rotate(90) scale(1.1385 1)" x="-17.17 -12.05 -5.86 -2.61 0.41 2.79 8.64 11.61" y="0" font-size="10.73" fill="#000">cut in y</text>
</svg>
</body></html>
